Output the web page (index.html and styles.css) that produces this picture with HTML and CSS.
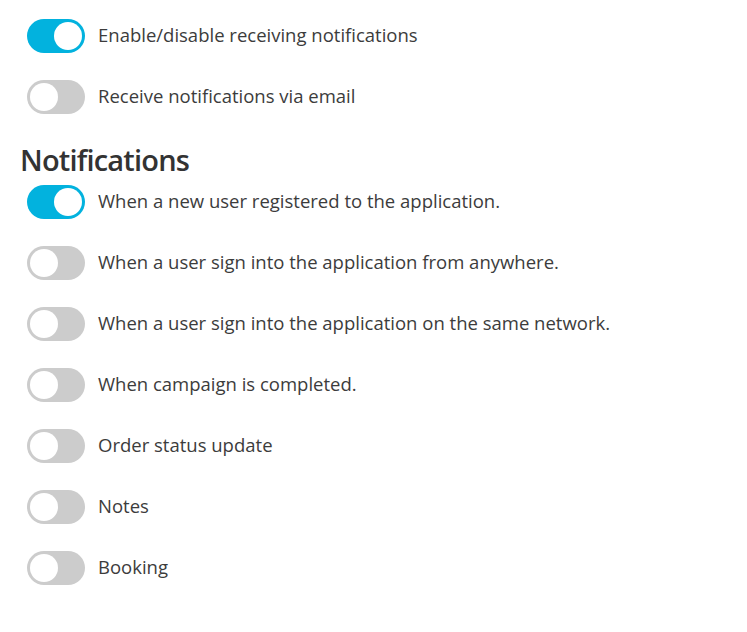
FILE: index.html
```html
<!DOCTYPE html>
<html lang="en">
<head>
<meta charset="utf-8">
<title>Notification settings</title>
<link rel="stylesheet" href="styles.css">
</head>
<body>
<div class="page">
  <div class="group">
    <label class="row"><span class="switch on"><span class="knob"></span></span><span class="label">Enable/disable receiving notifications</span></label>
    <label class="row"><span class="switch"><span class="knob"></span></span><span class="label">Receive notifications via email</span></label>
  </div>
  <h2 class="heading">Notifications</h2>
  <div class="group">
    <label class="row"><span class="switch on"><span class="knob"></span></span><span class="label">When a new user registered to the application.</span></label>
    <label class="row"><span class="switch"><span class="knob"></span></span><span class="label">When a user sign into the application from anywhere.</span></label>
    <label class="row"><span class="switch"><span class="knob"></span></span><span class="label">When a user sign into the application on the same network.</span></label>
    <label class="row"><span class="switch"><span class="knob"></span></span><span class="label">When campaign is completed.</span></label>
    <label class="row"><span class="switch"><span class="knob"></span></span><span class="label">Order status update</span></label>
    <label class="row"><span class="switch"><span class="knob"></span></span><span class="label">Notes</span></label>
    <label class="row"><span class="switch"><span class="knob"></span></span><span class="label">Booking</span></label>
  </div>
</div>
</body>
</html>
```
FILE: styles.css
```css
html, body {
  margin: 0;
  padding: 0;
  background: #ffffff;
}
body {
  font-family: "Open Sans", "Noto Sans", sans-serif;
  color: #3c3c3c;
}
.page {
  padding: 19px 20px 0 20px;
}
.group {
  display: flex;
  flex-direction: column;
  gap: 27px;
  padding-left: 7px;
}
.row {
  display: flex;
  align-items: center;
  gap: 13px;
  height: 34px;
}
.switch {
  position: relative;
  flex: none;
  width: 58px;
  height: 34px;
  border-radius: 17px;
  background: #cccccc;
}
.switch.on {
  background: #02b2de;
}
.knob {
  position: absolute;
  top: 3px;
  left: 3px;
  width: 28px;
  height: 28px;
  border-radius: 50%;
  background: #ffffff;
}
.switch.on .knob {
  left: 27px;
}
.label {
  font-size: 18.5px;
  line-height: 24px;
  padding-bottom: 3px;
}
.heading {
  margin: 27px 0 7px 0;
  padding: 0;
  height: 37px;
  font-size: 29px;
  line-height: 37px;
  font-weight: 600;
  letter-spacing: -0.8px;
  color: #333333;
}
```
